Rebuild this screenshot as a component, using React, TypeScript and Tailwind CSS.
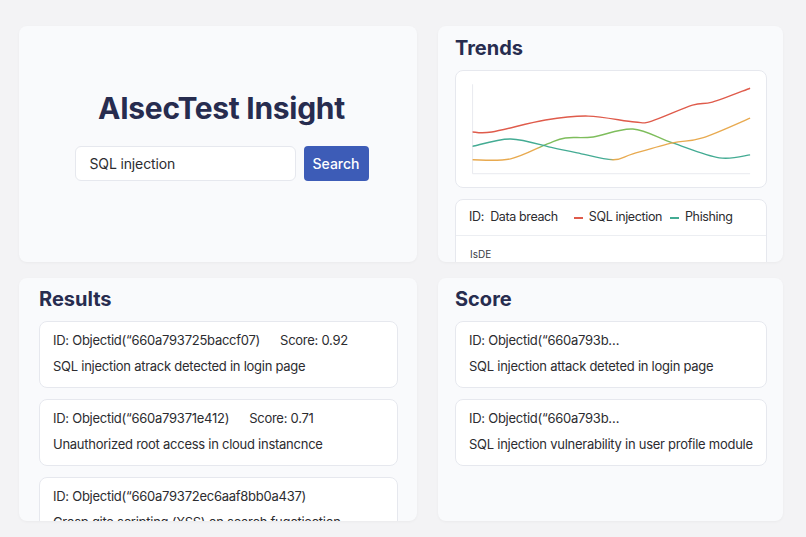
import React from "react";

type Pt = [number, number];

// catmull-rom -> cubic bezier path
function smooth(pts: Pt[]): string {
  let d = `M ${pts[0][0]} ${pts[0][1]}`;
  for (let i = 0; i < pts.length - 1; i++) {
    const p0 = pts[i - 1] || pts[i];
    const p1 = pts[i];
    const p2 = pts[i + 1];
    const p3 = pts[i + 2] || p2;
    const c1x = p1[0] + (p2[0] - p0[0]) / 6;
    const c1y = p1[1] + (p2[1] - p0[1]) / 6;
    const c2x = p2[0] - (p3[0] - p1[0]) / 6;
    const c2y = p2[1] - (p3[1] - p1[1]) / 6;
    d += ` C ${c1x} ${c1y} ${c2x} ${c2y} ${p2[0]} ${p2[1]}`;
  }
  return d;
}

const red: Pt[] = [[16.7, 61], [36, 61], [90, 49], [133, 45], [180, 51], [197, 50], [238, 34], [258, 31], [296, 17]];
const lineA: Pt[] = [[16.7, 75.5], [55, 68], [98, 77], [122, 82], [158, 89], [178, 83], [218, 72], [248, 67], [296, 47]];
const lineB: Pt[] = [[16.7, 89], [55, 88], [92, 73], [110, 67], [138, 66], [178, 58], [218, 72], [265, 87], [296, 84]];

const results = [
  { id: "ID: Objectid(“660a793725baccf07)", score: "Score: 0.92", text: "SQL injection atrack detected in login page" },
  { id: "ID: Objectid(“660a79371e412)", score: "Score: 0.71", text: "Unauthorized root access in cloud instancnce" },
  { id: "ID: Objectid(“660a79372ec6aaf8bb0a437)", score: "", text: "Crosp gite scripting (XSS) on search fugctiection" },
];

const scores = [
  { id: "ID: Objectid(“660a793b…", text: "SQL injection attack deteted in login page" },
  { id: "ID: Objectid(“660a793b…", text: "SQL injection vulnerability in user profile module" },
];

function TrendChart() {
  return (
    <svg viewBox="0 0 312 116" className="block w-full h-[116px]">
      <defs>
        <linearGradient id="gA" gradientUnits="userSpaceOnUse" x1="0" y1="0" x2="312" y2="0">
          <stop offset="0.49" stopColor="#43ab93" />
          <stop offset="0.51" stopColor="#e8aa50" />
        </linearGradient>
        <linearGradient id="gB" gradientUnits="userSpaceOnUse" x1="0" y1="0" x2="312" y2="0">
          <stop offset="0.26" stopColor="#e8aa50" />
          <stop offset="0.28" stopColor="#7ebd5c" />
          <stop offset="0.68" stopColor="#7ebd5c" />
          <stop offset="0.71" stopColor="#43ab93" />
        </linearGradient>
      </defs>
      <line x1="16.7" y1="13" x2="16.7" y2="103" stroke="#e8eaef" strokeWidth="1" />
      <line x1="16.7" y1="103" x2="296" y2="103" stroke="#e8eaef" strokeWidth="1" />
      <path d={smooth(lineB)} fill="none" stroke="url(#gB)" strokeWidth="1.4" />
      <path d={smooth(lineA)} fill="none" stroke="url(#gA)" strokeWidth="1.4" />
      <path d={smooth(red)} fill="none" stroke="#df5b4b" strokeWidth="1.4" />
    </svg>
  );
}

export default function App() {
  return (
    <div className="min-h-screen w-full bg-[#f3f3f5] font-['Inter','Liberation_Sans',sans-serif] text-[#2c2c30]">
      <div className="grid grid-cols-[398px_345px] grid-rows-[236px_243px] gap-x-[21px] gap-y-[16px] pt-[26px] pl-[19px] pb-[16px]">
        {/* HERO / SEARCH */}
        <div className="bg-[#f9fafc] rounded-lg shadow-[0_1px_3px_rgba(0,0,0,0.04)] flex flex-col items-center pt-[64px] pl-[7px]">
          <h1 className="text-[30px] leading-[36px] font-bold tracking-[-0.01em] text-[#272c4f] mb-[20px]">AIsecTest Insight</h1>
          <div className="flex gap-2">
            <div className="w-[221px] h-[35px] bg-white border border-[#e6e8ee] rounded-md flex items-center px-[14px] text-[14px] tracking-[-0.01em] text-[#2c2c30]">
              SQL injection
            </div>
            <button className="w-[65px] h-[35px] bg-[#3d5cb7] rounded-[4px] text-white text-[14px] font-medium">Search</button>
          </div>
        </div>

        {/* TRENDS */}
        <div className="bg-[#f9fafc] rounded-lg shadow-[0_1px_3px_rgba(0,0,0,0.04)] overflow-hidden pt-[8px] pl-[17px] pr-[16px]">
          <h2 className="text-[20px] leading-[28px] font-bold text-[#272c4f] mb-[8px]">Trends</h2>
          <div className="bg-white border border-[#e6e8ee] rounded-lg h-[118px]">
            <TrendChart />
          </div>
          <div className="mt-[11px] bg-white border border-[#e6e8ee] rounded-lg">
            <div className="h-[36px] flex items-center pl-[13px] text-[12.5px] tracking-[-0.03em] border-b border-[#eceef2]">
              <span>ID:&nbsp; Data breach</span>
              <span className="inline-block ml-[16px] w-[9px] h-[2px] bg-[#df5b4b]" />
              <span className="ml-[6px]">SQL injection</span>
              <span className="inline-block ml-[8px] w-[9px] h-[2px] bg-[#43ab93]" />
              <span className="ml-[6px]">Phishing</span>
            </div>
            <div className="pl-[14px] pt-[11px] pb-4 text-[10px] text-[#3a3a3f]">IsDE</div>
          </div>
        </div>

        {/* RESULTS */}
        <div className="bg-[#f9fafc] rounded-lg shadow-[0_1px_3px_rgba(0,0,0,0.04)] overflow-hidden pt-[7px] pl-[20px] pr-[19px]">
          <h2 className="text-[20px] leading-[28px] font-bold text-[#272c4f] mb-[8px]">Results</h2>
          <div className="flex flex-col gap-[11px]">
            {results.map((r) => (
              <div key={r.id} className="bg-white border border-[#e6e8ee] rounded-lg h-[67px] px-[13px] pt-[9px] text-[13px] tracking-[-0.02em]">
                <div className="flex gap-[20px] h-[20px] items-center">
                  <span>{r.id}</span>
                  {r.score && <span>{r.score}</span>}
                </div>
                <div className="h-[20px] mt-[6px] flex items-center">{r.text}</div>
              </div>
            ))}
          </div>
        </div>

        {/* SCORE */}
        <div className="bg-[#f9fafc] rounded-lg shadow-[0_1px_3px_rgba(0,0,0,0.04)] overflow-hidden pt-[7px] pl-[17px] pr-[16px]">
          <h2 className="text-[20px] leading-[28px] font-bold text-[#272c4f] mb-[8px]">Score</h2>
          <div className="flex flex-col gap-[11px]">
            {scores.map((s, i) => (
              <div key={i} className="bg-white border border-[#e6e8ee] rounded-lg h-[67px] px-[13px] pt-[9px] text-[13px] tracking-[-0.02em]">
                <div className="h-[20px] flex items-center">{s.id}</div>
                <div className="h-[20px] mt-[6px] flex items-center whitespace-nowrap">{s.text}</div>
              </div>
            ))}
          </div>
        </div>
      </div>
    </div>
  );
}
